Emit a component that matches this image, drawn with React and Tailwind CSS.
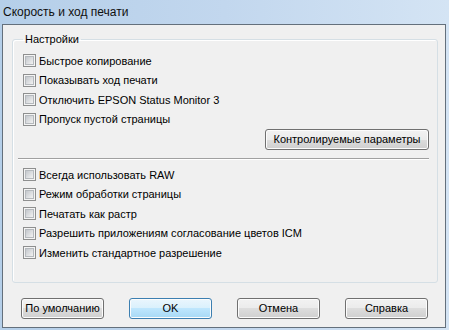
const TOP_OPTIONS = [
  "Быстрое копирование",
  "Показывать ход печати",
  "Отключить EPSON Status Monitor 3",
  "Пропуск пустой страницы",
];

const BOTTOM_OPTIONS = [
  "Всегда использовать RAW",
  "Режим обработки страницы",
  "Печатать как растр",
  "Разрешить приложениям согласование цветов ICM",
  "Изменить стандартное разрешение",
];

function CheckRow({ label }) {
  return (
    <div className="flex h-[19.5px] items-center pl-[5px]">
      <span className="flex h-[13px] w-[13px] shrink-0 border border-[#8e8f8f] bg-[#f4f4f4] p-[1px]">
        <span className="h-full w-full border border-[#b5b9bd] bg-linear-to-br from-[#c4c8cd] to-[#f2f2f2]" />
      </span>
      <span className="ml-[3px] whitespace-nowrap">{label}</span>
    </div>
  );
}

function WinButton({ children, primary }) {
  return (
    <button
      className={
        "flex h-[21px] w-[83px] items-center justify-center rounded-[3px] border text-black shadow-[inset_0_0_0_1px_#fcfcfc] " +
        (primary
          ? "border-[#3c7fb1] bg-[linear-gradient(to_bottom,#eaf6fd_0%,#d9f0fc_50%,#bee6fd_50%,#a7d9f5_100%)]"
          : "border-[#707070] bg-[linear-gradient(to_bottom,#f2f2f2_0%,#ebebeb_50%,#dddddd_50%,#cfcfcf_100%)]")
      }
    >
      {children}
    </button>
  );
}

export default function App() {
  return (
    <div className="flex h-[330px] w-[449px] flex-col bg-linear-to-r from-[#b5cfe9] via-[#c2d7ee] to-[#d4e4f4] font-['Liberation_Sans',Arial,sans-serif] text-[11px] text-black">
      <div className="flex h-[24px] shrink-0 items-center pl-[3px] text-[12px] text-[#101010]">
        Скорость и ход печати
      </div>

      <div className="mb-[2px] ml-[2px] mr-[3px] flex flex-1 flex-col border border-[#64707c] bg-[#f0f0f0] pl-[9px] pr-[7px] pt-[7px]">
        <fieldset className="rounded-[3px] border border-[#d5dfe5] pb-[19px] pl-[5px] pr-[8px] shadow-[inset_1px_1px_0_#ffffff]">
          <legend className="ml-[5px] px-[2px] leading-[14px]">Настройки</legend>
          <div className="pt-[5px]">
            {TOP_OPTIONS.map((o) => (
              <CheckRow key={o} label={o} />
            ))}
          </div>
          <div className="flex justify-end">
            <button className="flex h-[21px] w-[164px] items-center justify-center rounded-[3px] border border-[#707070] bg-[linear-gradient(to_bottom,#f2f2f2_0%,#ebebeb_50%,#dddddd_50%,#cfcfcf_100%)] text-black shadow-[inset_0_0_0_1px_#fcfcfc]">
              Контролируемые параметры
            </button>
          </div>
          <div className="mt-[8px] border-t border-b border-t-[#a0a0a0] border-b-white" />
          <div className="pt-[5px]">
            {BOTTOM_OPTIONS.map((o) => (
              <CheckRow key={o} label={o} />
            ))}
          </div>
        </fieldset>

        <div className="mt-[15px] flex gap-[25px] pl-[9px]">
          <WinButton>По умолчанию</WinButton>
          <WinButton primary>OK</WinButton>
          <WinButton>Отмена</WinButton>
          <WinButton>Справка</WinButton>
        </div>
      </div>
    </div>
  );
}
